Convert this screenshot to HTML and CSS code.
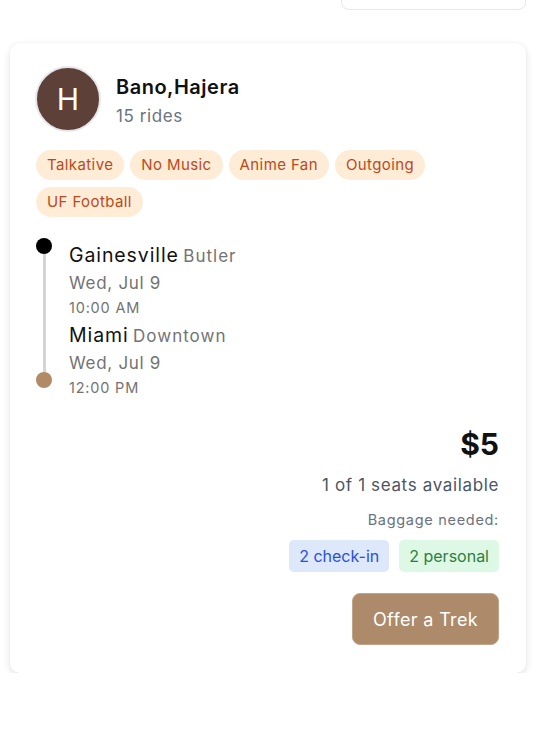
FILE: index.html
```html
<!DOCTYPE html>
<html lang="en">
<head>
<meta charset="utf-8">
<title>Ride request</title>
<link rel="stylesheet" href="styles.css">
</head>
<body>
<div class="page">
  <div class="toolbar">
    <div class="top-box"></div>
  </div>
  <div class="card">
    <div class="rider">
      <div class="avatar">H</div>
      <div class="rider-info">
        <div class="rider-name">Bano,Hajera</div>
        <div class="rider-rides">15 rides</div>
      </div>
    </div>
    <div class="tags">
      <span class="tag">Talkative</span>
      <span class="tag">No Music</span>
      <span class="tag">Anime Fan</span>
      <span class="tag">Outgoing</span>
      <span class="tag">UF Football</span>
    </div>
    <div class="route">
      <div class="rail">
        <span class="dot dot-start"></span>
        <span class="line"></span>
        <span class="dot dot-end"></span>
      </div>
      <div class="stops">
        <div class="stop">
          <div class="stop-place"><span class="city">Gainesville</span> <span class="area">Butler</span></div>
          <div class="stop-date">Wed, Jul 9</div>
          <div class="stop-time">10:00 AM</div>
        </div>
        <div class="stop">
          <div class="stop-place"><span class="city">Miami</span> <span class="area">Downtown</span></div>
          <div class="stop-date">Wed, Jul 9</div>
          <div class="stop-time">12:00 PM</div>
        </div>
      </div>
    </div>
    <div class="summary">
      <div class="price">$5</div>
      <div class="seats">1 of 1 seats available</div>
      <div class="baggage-label">Baggage needed:</div>
      <div class="baggage">
        <span class="bag bag-checkin">2 check-in</span>
        <span class="bag bag-personal">2 personal</span>
      </div>
      <button class="offer-btn" type="button">Offer a Trek</button>
    </div>
  </div>
</div>
</body>
</html>
```
FILE: styles.css
```css
* { box-sizing: border-box; }
html, body { margin: 0; padding: 0; background: #ffffff; }
body {
  font-family: Inter, "Noto Sans", "Liberation Sans", sans-serif;
  color: #111111;
}
.page {
  padding: 0 12px 0 10px;
}
.toolbar {
  display: flex;
  justify-content: flex-end;
}
.top-box {
  width: 185px;
  height: 40px;
  margin-top: -30px;
  border: 1px solid #e5e7eb;
  border-radius: 8px;
  background: #fff;
}
.card {
  margin-top: 33px;
  background: #fff;
  border-radius: 10px;
  box-shadow: 0 3px 8px rgba(0,0,0,0.11), 0 0 2px rgba(0,0,0,0.05);
  padding: 23px 27px 28px 26px;
}
.rider {
  display: flex;
  align-items: center;
  gap: 15px;
}
.avatar {
  width: 66px;
  height: 66px;
  border-radius: 50%;
  background: #5d4037;
  border: 2px solid #e5e7eb;
  color: #fff;
  font-size: 30px;
  display: flex;
  align-items: center;
  justify-content: center;
  margin-left: -1px;
}
.rider-info {
  display: flex;
  flex-direction: column;
  gap: 5px;
  padding-top: 4px;
}
.rider-name {
  font-size: 20px;
  font-weight: 600;
  line-height: 24px;
  letter-spacing: 0.5px;
  color: #111;
}
.rider-rides {
  font-size: 17px;
  line-height: 24px;
  letter-spacing: 0.6px;
  color: #6b7280;
}
.tags {
  display: flex;
  flex-wrap: wrap;
  gap: 7px 6px;
  margin-top: 18px;
}
.tag {
  height: 30px;
  line-height: 30px;
  padding: 0 11px;
  border-radius: 15px;
  background: #feecd6;
  color: #b94a1c;
  font-size: 15px;
  letter-spacing: 0.4px;
}
.route {
  display: flex;
  gap: 17px;
  margin-top: 26px;
}
.rail {
  width: 16px;
  display: flex;
  flex-direction: column;
  align-items: center;
  margin-top: -5px;
  margin-bottom: 10px;
}
.dot {
  width: 16px;
  height: 16px;
  border-radius: 50%;
  flex: none;
}
.dot-start { background: #000; }
.dot-end { background: #b08b65; }
.line {
  flex: 1;
  width: 3px;
  background: #d4d4d4;
}
.stops {
  display: flex;
  flex-direction: column;
  gap: 5px;
}
.stop-place {
  height: 24px;
  line-height: 24px;
  white-space: nowrap;
}
.city {
  font-size: 19.5px;
  letter-spacing: 0.9px;
  color: #111;
}
.area {
  font-size: 17px;
  letter-spacing: 1px;
  color: #737373;
}
.stop-date {
  margin-top: 4px;
  font-size: 17px;
  line-height: 24px;
  letter-spacing: 0.7px;
  color: #737373;
}
.stop-time {
  margin-top: 3px;
  font-size: 14.5px;
  line-height: 20px;
  letter-spacing: 0.8px;
  color: #737373;
}
.summary {
  display: flex;
  flex-direction: column;
  align-items: flex-end;
  margin-top: 28px;
}
.price {
  font-size: 30px;
  font-weight: 700;
  line-height: 36px;
  color: #111;
}
.seats {
  margin-top: 11px;
  font-size: 17px;
  line-height: 24px;
  letter-spacing: 0.64px;
  color: #4b5563;
}
.baggage-label {
  margin-top: 13px;
  font-size: 14.5px;
  line-height: 20px;
  letter-spacing: 0.7px;
  color: #6b7280;
}
.baggage {
  display: flex;
  gap: 10px;
  margin-top: 10px;
}
.bag {
  height: 32px;
  line-height: 32px;
  padding: 0 10px;
  border-radius: 5px;
  font-size: 16px;
}
.bag-checkin { background: #dde8fb; color: #2b4fd6; }
.bag-personal { background: #ddf8e5; color: #2f7d3e; }
.offer-btn {
  margin-top: 21px;
  height: 52px;
  padding: 0 20px;
  border: 1px solid #c2a588;
  border-radius: 8px;
  background: #ad8a69;
  color: #fff;
  font-family: inherit;
  font-size: 18px;
  letter-spacing: 0.35px;
}
```
